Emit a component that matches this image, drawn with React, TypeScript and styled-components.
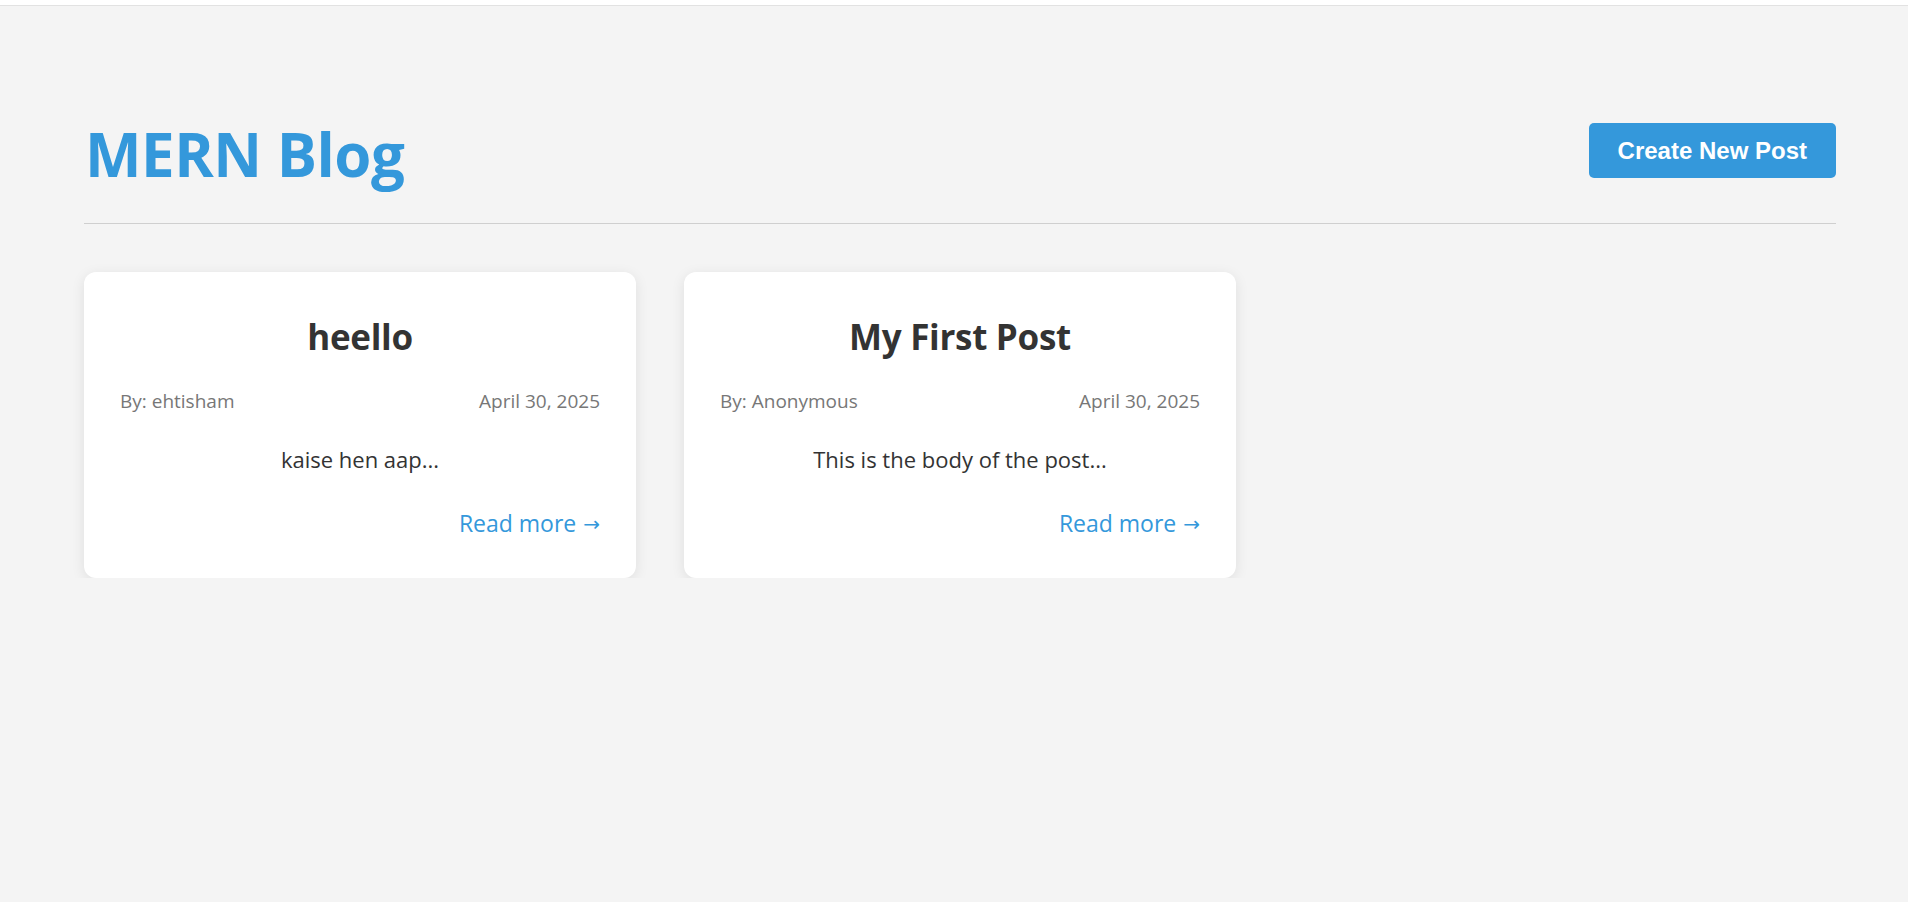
import styled, { createGlobalStyle } from "styled-components";

interface Post {
    id: string;
    title: string;
    author: string;
    date: string;
    excerpt: string;
}

const posts: Post[] = [
    { id: "1", title: "heello", author: "ehtisham", date: "April 30, 2025", excerpt: "kaise hen aap..." },
    { id: "2", title: "My First Post", author: "Anonymous", date: "April 30, 2025", excerpt: "This is the body of the post..." },
];

const GlobalStyle = createGlobalStyle`
    html, body {
        margin: 0;
        padding: 0;
        background: #f4f4f4;
        font-family: "Open Sans", "Noto Sans", sans-serif;
        color: #333;
    }
`;

const TopBar = styled.div`
    height: 5px;
    background: #ffffff;
    border-bottom: 1px solid #e2e2e2;
`;

const Page = styled.main`
    padding: 112px 72px 0 84px;
`;

const Header = styled.header`
    display: flex;
    justify-content: space-between;
    align-items: flex-start;
    padding-bottom: 33px;
    border-bottom: 1px solid #cfcfcf;
`;

const Logo = styled.h1`
    margin: 0;
    padding-left: 1px;
    font-size: 60px;
    line-height: 72px;
    font-weight: 700;
    color: #3498db;
    letter-spacing: -0.5px;
`;

const CreateButton = styled.button`
    margin-top: 5px;
    height: 55px;
    padding: 0 29px;
    border: none;
    border-radius: 5px;
    background: #3498db;
    color: #ffffff;
    font-family: "Liberation Sans", Arial, sans-serif;
    font-size: 24px;
    font-weight: 700;
    cursor: pointer;
`;

const Grid = styled.section`
    display: grid;
    grid-template-columns: repeat(3, 1fr);
    gap: 48px;
    margin-top: 48px;
`;

const Card = styled.article`
    background: #ffffff;
    border-radius: 12px;
    padding: 41px 36px 38px;
    box-shadow: 0 3px 14px rgba(0, 0, 0, 0.09);
    display: flex;
    flex-direction: column;
`;

const CardTitle = styled.h2`
    margin: 0;
    text-align: center;
    font-size: 35px;
    line-height: 48px;
    font-weight: 700;
    color: #333;
    letter-spacing: -0.3px;
`;

const Meta = styled.div`
    display: flex;
    justify-content: space-between;
    margin-top: 26px;
    font-size: 19px;
    line-height: 28px;
    color: #777;
`;

const Excerpt = styled.p`
    margin: 28px 0 0;
    text-align: center;
    font-size: 22px;
    line-height: 32px;
    color: #333;
`;

const ReadMore = styled.a`
    align-self: flex-end;
    margin-top: 32px;
    font-size: 23px;
    line-height: 32px;
    color: #3498db;
    text-decoration: none;
`;

const Arrow = styled.span`
    font-family: "DejaVu Sans", sans-serif;
    font-size: 20px;
    vertical-align: 1px;
    margin-left: 1px;
`;

const PostCard = ({ post }: { post: Post }) => (
    <Card>
        <CardTitle>{post.title}</CardTitle>
        <Meta>
            <span>By: {post.author}</span>
            <span>{post.date}</span>
        </Meta>
        <Excerpt>{post.excerpt}</Excerpt>
        <ReadMore href="#">
            Read more <Arrow>→</Arrow>
        </ReadMore>
    </Card>
);

export default function App() {
    return (
        <>
            <GlobalStyle />
            <TopBar />
            <Page>
                <Header>
                    <Logo>MERN Blog</Logo>
                    <CreateButton>Create New Post</CreateButton>
                </Header>
                <Grid>
                    {posts.map(post => (
                        <PostCard key={post.id} post={post} />
                    ))}
                </Grid>
            </Page>
        </>
    );
}
